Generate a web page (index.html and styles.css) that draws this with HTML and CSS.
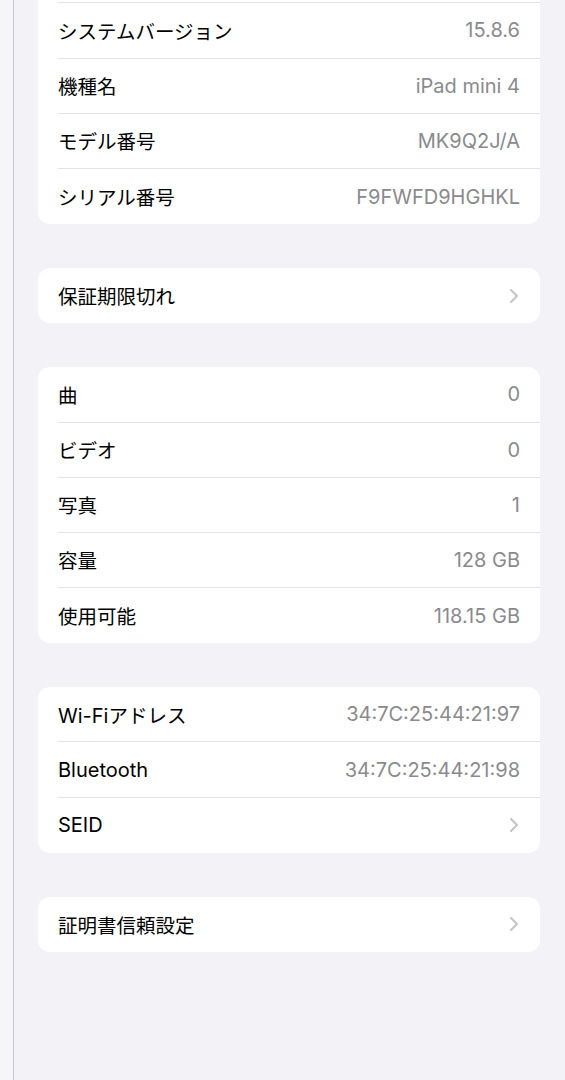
FILE: index.html
```html
<!DOCTYPE html>
<html lang="ja">
<head>
  <meta charset="UTF-8">
  <meta name="viewport" content="width=device-width, initial-scale=1.0">
  <title>情報</title>
  <link rel="stylesheet" href="styles.css">
</head>
<body>

  <div class="edge"></div>

  <div class="main">

    <!-- Device info -->
    <div class="group first">
      <div class="row"><span class="label">名前</span><span class="value">iPad</span></div>
      <div class="row"><span class="label">システムバージョン</span><span class="value">15.8.6</span></div>
      <div class="row"><span class="label">機種名</span><span class="value">iPad mini 4</span></div>
      <div class="row"><span class="label">モデル番号</span><span class="value">MK9Q2J/A</span></div>
      <div class="row"><span class="label">シリアル番号</span><span class="value">F9FWFD9HGHKL</span></div>
    </div>

    <div class="group">
      <div class="row link">
        <span class="label">保証期限切れ</span>
        <svg class="chevron" width="8" height="14" viewBox="0 0 8 14"><path d="M1 1l6 6-6 6" fill="none" stroke="#c4c4c7" stroke-width="2" stroke-linecap="round" stroke-linejoin="round"/></svg>
      </div>
    </div>

    <!-- Media / storage -->
    <div class="group">
      <div class="row"><span class="label">曲</span><span class="value">0</span></div>
      <div class="row"><span class="label">ビデオ</span><span class="value">0</span></div>
      <div class="row"><span class="label">写真</span><span class="value">1</span></div>
      <div class="row"><span class="label">容量</span><span class="value">128 GB</span></div>
      <div class="row"><span class="label">使用可能</span><span class="value">118.15 GB</span></div>
    </div>

    <!-- Network -->
    <div class="group">
      <div class="row"><span class="label"><span class="latin">Wi-Fi</span>アドレス</span><span class="value">34:7C:25:44:21:97</span></div>
      <div class="row"><span class="label latin">Bluetooth</span><span class="value">34:7C:25:44:21:98</span></div>
      <div class="row link">
        <span class="label latin">SEID</span>
        <svg class="chevron" width="8" height="14" viewBox="0 0 8 14"><path d="M1 1l6 6-6 6" fill="none" stroke="#c4c4c7" stroke-width="2" stroke-linecap="round" stroke-linejoin="round"/></svg>
      </div>
    </div>

    <div class="group">
      <div class="row link">
        <span class="label">証明書信頼設定</span>
        <svg class="chevron" width="8" height="14" viewBox="0 0 8 14"><path d="M1 1l6 6-6 6" fill="none" stroke="#c4c4c7" stroke-width="2" stroke-linecap="round" stroke-linejoin="round"/></svg>
      </div>
    </div>

  </div>

</body>
</html>
```

FILE: styles.css
```css
body {
  font-family: Inter, "Noto Sans CJK JP", sans-serif;
  font-size: 19.5px;
  background-color: #f2f2f7;
  margin: 0;
  padding: 0;
  display: flex;
  height: 100vh;
  overflow: hidden;
}

.edge {
  width: 13px;
  flex-shrink: 0;
  background: #f6f6f9;
  border-right: 1px solid #c9c9cd;
}

.main {
  flex: 1;
  padding: 0 25px 0 24px;
}

/* Grouped cards */
.group {
  background: #fff;
  border-radius: 12px;
  margin-bottom: 44px;
  overflow: hidden;
}

.group.first {
  margin-top: -51.8px;
}

.row {
  height: 55.2px;
  box-sizing: border-box;
  margin-left: 20px;
  padding-right: 20px;
  display: flex;
  justify-content: space-between;
  align-items: center;
  border-bottom: 1px solid #e3e3e6;
}

.row:last-child {
  border-bottom: none;
}

.label {
  color: #000;
}

.latin {
  font-size: 20px;
}

.value {
  color: #8a8a8e;
  font-size: 20px;
}

.link {
  padding-right: 22px;
}

.chevron {
  display: block;
}
```
